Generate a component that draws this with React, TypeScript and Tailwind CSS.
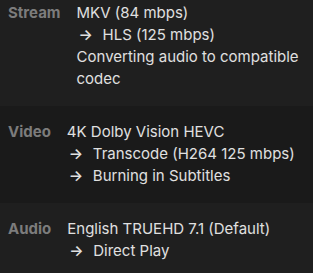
const rows = [
  {
    label: 'Stream',
    bg: 'bg-[#1f1f1f]',
    lines: [
      { arrow: false, text: 'MKV (84 mbps)' },
      { arrow: true, text: 'HLS (125 mbps)' },
      { arrow: false, text: 'Converting audio to compatible codec' },
    ],
  },
  {
    label: 'Video',
    bg: 'bg-[#1a1a1a]',
    lines: [
      { arrow: false, text: '4K Dolby Vision HEVC' },
      { arrow: true, text: 'Transcode (H264 125 mbps)' },
      { arrow: true, text: 'Burning in Subtitles' },
    ],
  },
  {
    label: 'Audio',
    bg: 'bg-[#1f1f1f]',
    lines: [
      { arrow: false, text: 'English TRUEHD 7.1 (Default)' },
      { arrow: true, text: 'Direct Play' },
    ],
  },
];

export default function App() {
  return (
    <div className="h-[273px] w-[313px] overflow-hidden bg-[#1f1f1f] font-['Inter',sans-serif] text-[15px] leading-[22px]">
      <div className="-mt-[13px] flex flex-col">
        {rows.map((row) => (
          <div key={row.label} className={`flex gap-4 pt-[15px] pb-[16px] pl-2 pr-2 ${row.bg}`}>
            <span className="font-bold text-[#7c7c7c]">{row.label}</span>
            <div className="flex flex-col text-[#e0e0e0]">
              {row.lines.map((line, i) => (
                <div key={i} className="flex">
                  {line.arrow && <span className="w-[26px] shrink-0 pl-[2px] font-semibold">→</span>}
                  <span>{line.text}</span>
                </div>
              ))}
            </div>
          </div>
        ))}
      </div>
    </div>
  );
}
